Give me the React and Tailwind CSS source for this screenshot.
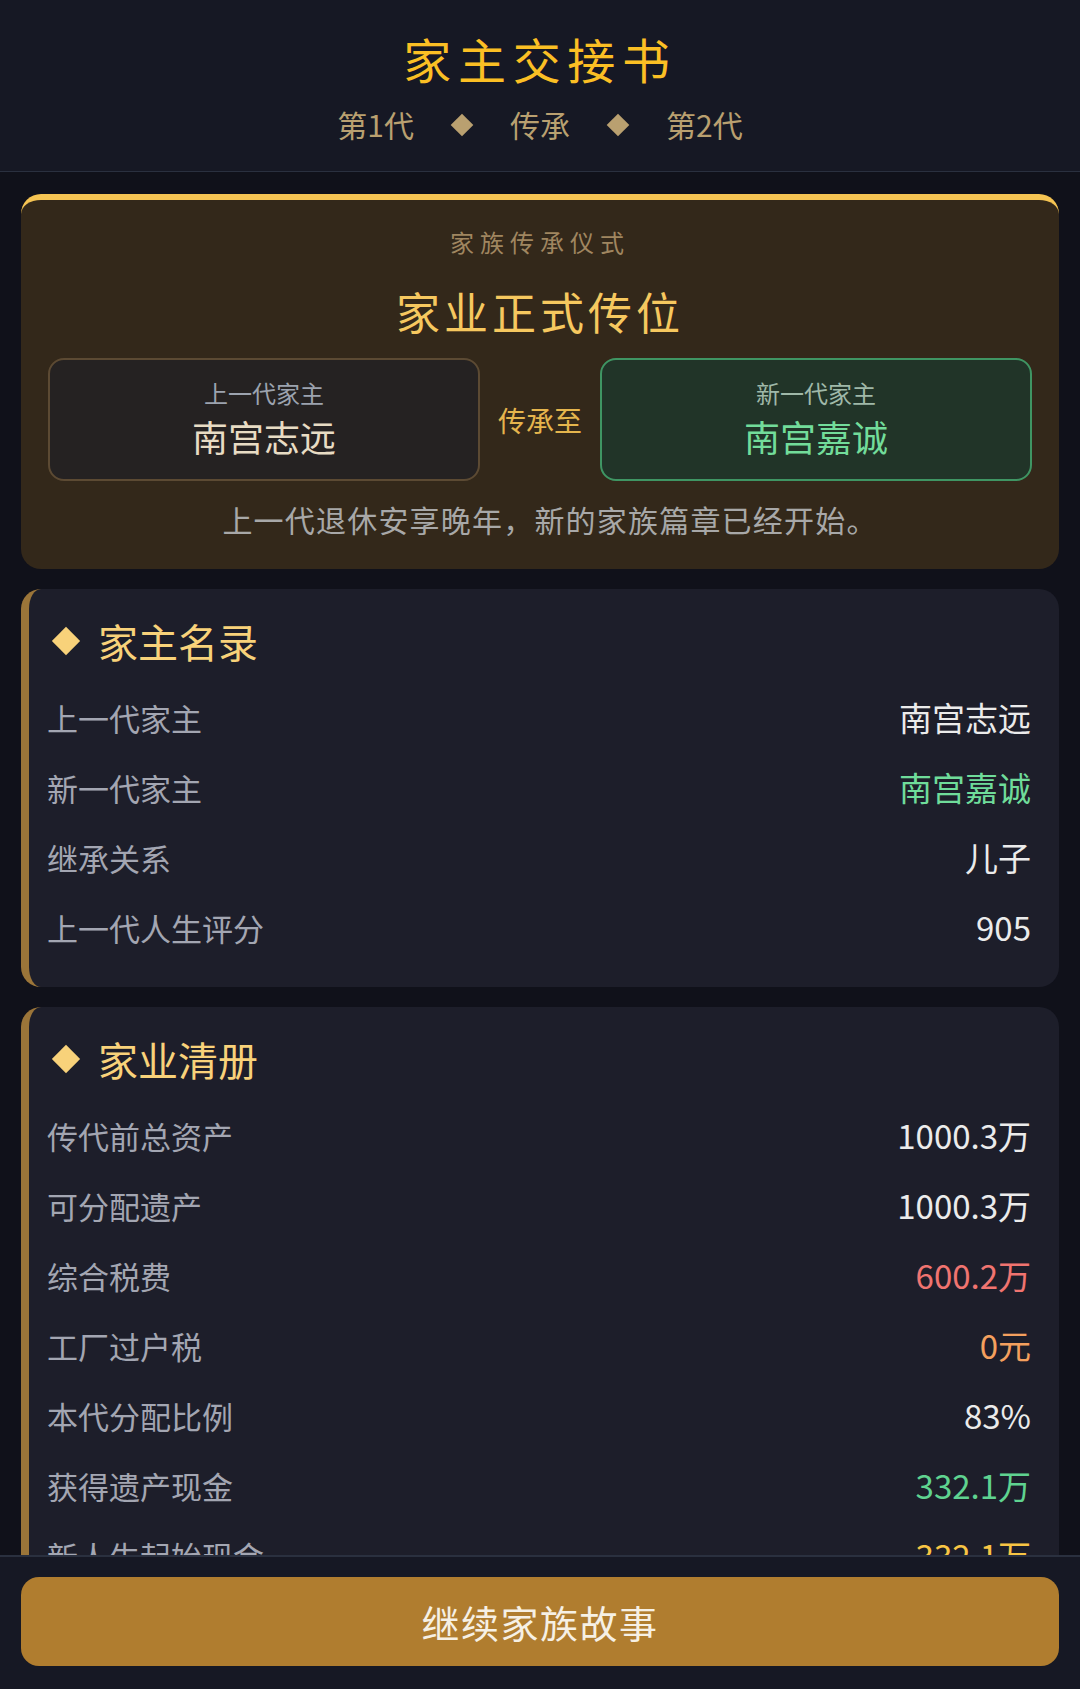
import React from "react";

const font = { fontFamily: '"Noto Sans CJK SC", "Noto Sans", sans-serif' };

const rulers = [
  { label: "上一代家主", value: "南宫志远", color: "text-[#ebebeb]" },
  { label: "新一代家主", value: "南宫嘉诚", color: "text-[#6fdc9a]" },
  { label: "继承关系", value: "儿子", color: "text-[#ebebeb]" },
  { label: "上一代人生评分", value: "905", color: "text-[#ebebeb]" },
];

const estate = [
  { label: "传代前总资产", value: "1000.3万", color: "text-[#ebebeb]" },
  { label: "可分配遗产", value: "1000.3万", color: "text-[#ebebeb]" },
  { label: "综合税费", value: "600.2万", color: "text-[#f07470]" },
  { label: "工厂过户税", value: "0元", color: "text-[#f4a05e]" },
  { label: "本代分配比例", value: "83%", color: "text-[#ebebeb]" },
  { label: "获得遗产现金", value: "332.1万", color: "text-[#5fd390]" },
  { label: "新人生起始现金", value: "332.1万", color: "text-[#f8c544]" },
];

const Section = ({ title, rows }) => (
  <div className="shrink-0 rounded-[20px] border-l-[8px] border-[#9b7539] bg-[#1d1e2a] pt-6 pb-6 pl-[18px] pr-[28px]">
    <div className="flex h-[56px] items-center">
      <div className="ml-[9px] mr-[22px] h-[20px] w-[20px] rotate-45 bg-[#f8d27a]" />
      <span className="text-[40px] leading-[56px] text-[#f8d27a]">{title}</span>
    </div>
    <div className="mt-[14px]">
      {rows.map((r) => (
        <div key={r.label} className="flex h-[70px] items-center justify-between">
          <span className="text-[31px] text-[#a3a6b2]">{r.label}</span>
          <span className={`text-[33px] ${r.color}`}>{r.value}</span>
        </div>
      ))}
    </div>
  </div>
);

export default function App() {
  return (
    <div style={font} className="flex h-[1689px] w-full flex-col overflow-hidden bg-[#10111a]">
      {/* Header */}
      <header className="shrink-0 border-b border-[#2a303f] bg-[#161824] pt-[29px] pb-[27px] text-center">
        <h1 className="text-[48px] leading-[58px] tracking-[0.14em] text-[#fbbf24]">家主交接书</h1>
        <div className="mt-[18px] flex items-center justify-center gap-[40px] text-[30px] leading-[39px] text-[#b9a070]">
          <span>第1代</span>
          <span className="h-[16px] w-[16px] rotate-45 bg-[#b9a070]" />
          <span>传承</span>
          <span className="h-[16px] w-[16px] rotate-45 bg-[#b9a070]" />
          <span>第2代</span>
        </div>
      </header>

      {/* Content */}
      <main className="flex flex-1 flex-col gap-5 overflow-hidden px-[21px] pt-[22px]">
        <div className="shrink-0 rounded-[20px] border-t-[6px] border-[#f5c453] bg-[#33281a] px-[27px] pt-[26px] pb-[30px] text-center">
          <div className="text-[24px] leading-[32px] tracking-[0.25em] text-[#a08660]">家族传承仪式</div>
          <div className="mt-[25px] text-[44px] leading-[56px] tracking-[0.09em] text-[#f6c85f]">家业正式传位</div>
          <div className="mt-[19px] grid grid-cols-[1fr_auto_1fr] items-center gap-[18px]">
            <div className="h-[123px] rounded-[16px] border-2 border-[#5c4a33] bg-[#252222] pt-[17px]">
              <div className="text-[24px] leading-[32px] text-[#9ca3af]">上一代家主</div>
              <div className="mt-[4px] text-[36px] leading-[46px] text-[#e8dcc4]">南宫志远</div>
            </div>
            <div className="text-[28px] text-[#e5b54d]">传承至</div>
            <div className="h-[123px] rounded-[16px] border-2 border-[#3f9563] bg-[#213428] pt-[17px]">
              <div className="text-[24px] leading-[32px] text-[#9fb8a8]">新一代家主</div>
              <div className="mt-[4px] text-[36px] leading-[46px] text-[#72dc9a]">南宫嘉诚</div>
            </div>
          </div>
          <p className="mt-[18px] pl-[20px] text-[30px] leading-[40px] tracking-[0.04em] text-[#a8a8a8]">
            上一代退休安享晚年，新的家族篇章已经开始。
          </p>
        </div>

        <Section title="家主名录" rows={rulers} />
        <Section title="家业清册" rows={estate} />
      </main>

      {/* Footer */}
      <footer className="shrink-0 border-t-2 border-[#2a303f] bg-[#161824] px-[21px] pt-5 pb-[23px]">
        <button className="flex h-[89px] w-full items-center justify-center rounded-[18px] bg-[#b07d2f] text-[38px] tracking-[0.04em] text-[#f6f0e4]">
          继续家族故事
        </button>
      </footer>
    </div>
  );
}
